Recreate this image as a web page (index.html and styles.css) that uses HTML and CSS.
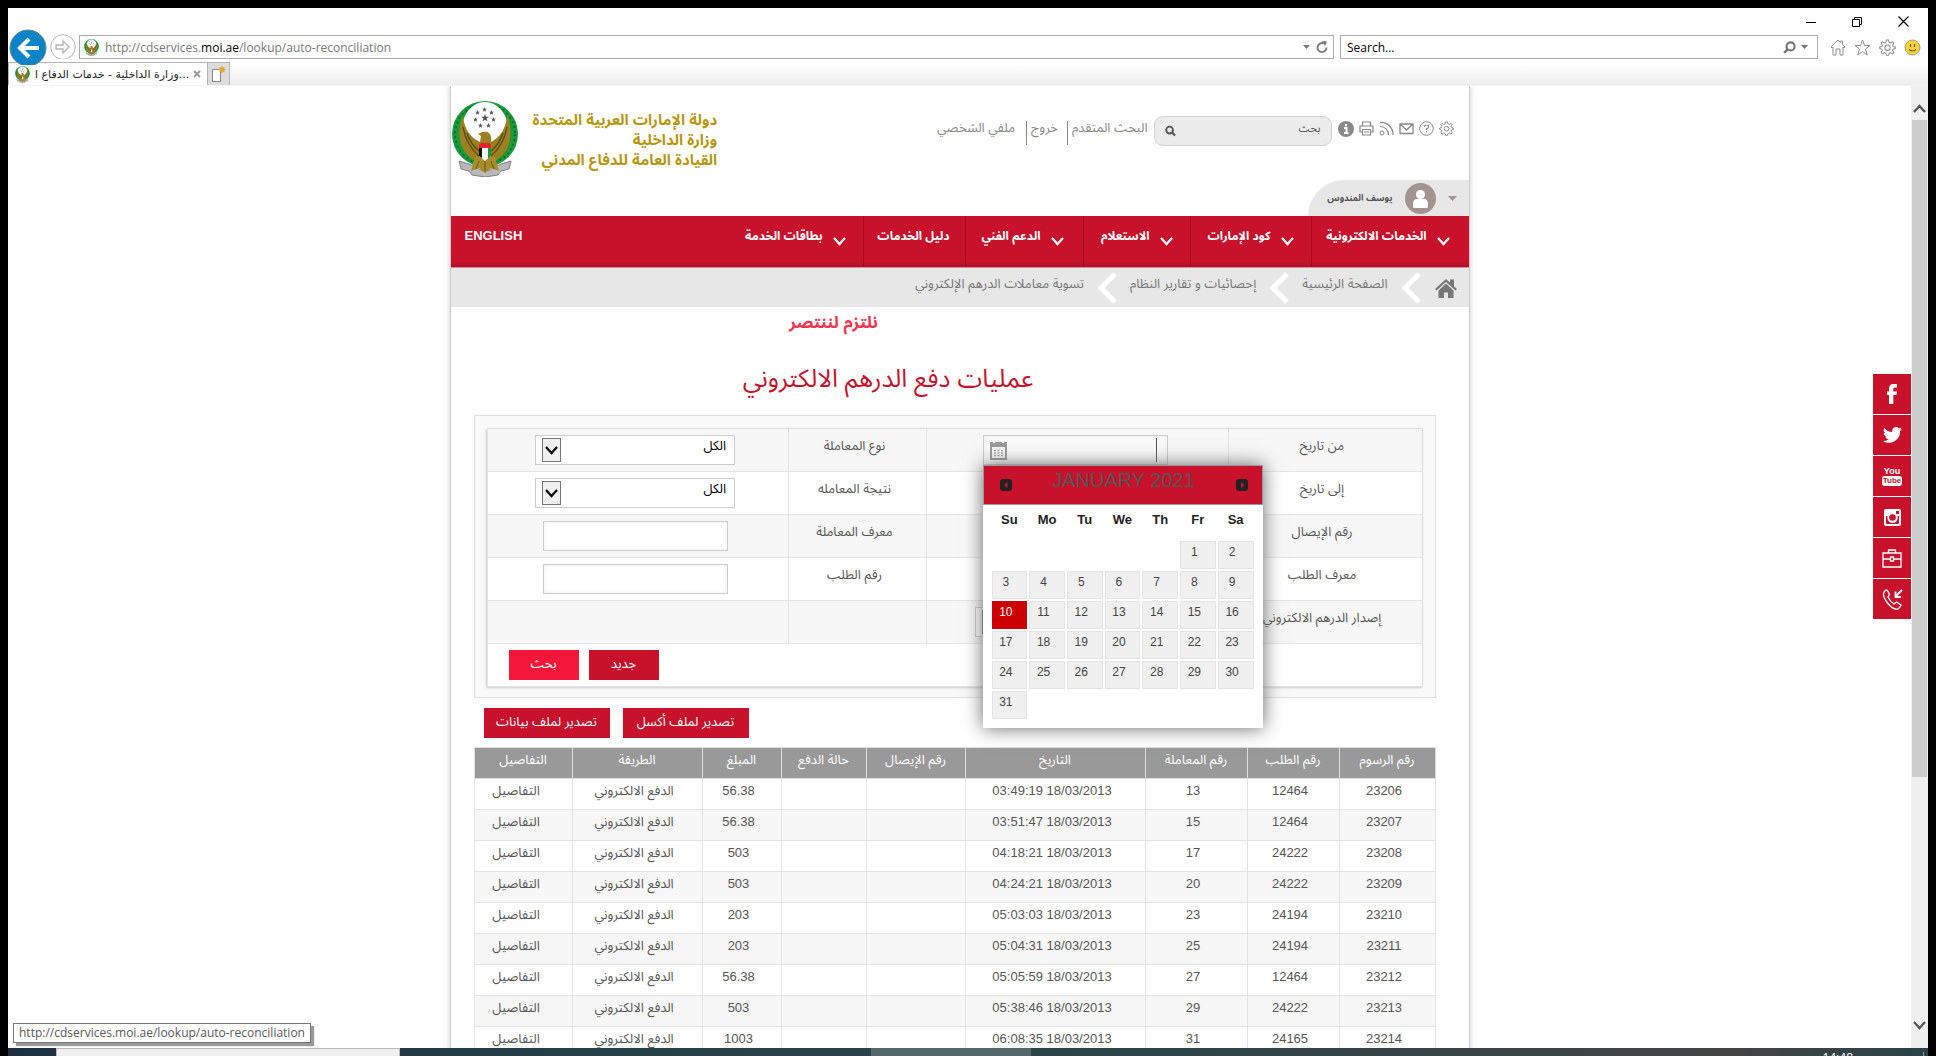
FILE: index.html
```html
<!DOCTYPE html>
<html lang="ar">
<head>
<meta charset="utf-8">
<title>وزارة الداخلية - خدمات الدفاع المدني</title>
<link rel="stylesheet" href="styles.css">
</head>
<body>
<svg class="defs" width="0" height="0" aria-hidden="true">
  <symbol id="star" viewBox="0 0 10 10"><path d="M5 0l1.300 3.400H10L7.100 5.700 8.200 9.500 5 7.300 1.800 9.500l1.100-3.800L0 3.400h3.700z"/></symbol>
  <symbol id="emblem" viewBox="0 0 68 76">
    <path d="M8 60l10 3 16 8 16-8 10-3-2 8-8 2-3 4-13 2-13-2-3-4-8-2z" fill="#b9b9bd" stroke="#7d7d84" stroke-width="1"/>
    <circle cx="34" cy="33" r="33" fill="#169a3c"/>
    <circle cx="34" cy="33" r="30" fill="none" stroke="#0c6f28" stroke-width="2" stroke-dasharray="2 3"/>
    <ellipse cx="34" cy="28" rx="23" ry="27" fill="#fff"/>
    <path d="M12 14C4 34 9 55 29 62l5-6 5 6C59 55 64 34 56 14c-1 14-7 22-16 27v-5c-1-5-4-6-9-5l-4 2 3 2-1 6C19 36 13 28 12 14z" fill="#9c8122"/>
    <path d="M12 26c2 12 8 22 16 29M16 32c3 9 7 14 12 18M56 26c-2 12-8 22-16 29M52 32c-3 9-7 14-12 18" fill="none" stroke="#5e4d10" stroke-width="1.500"/>
    <path d="M24 56h20l4 14-8-3-6 5-6-5-8 3z" fill="#a88c28"/><path d="M28 60l-3 8M34 60v10M40 60l3 8" stroke="#6a5712" fill="none"/>
    <path d="M28 44h12v11l-6 5-6-5z" fill="#fff"/><path d="M28 46h3v11l-3-2z" fill="#111"/><path d="M37 46h3v9l-3 3z" fill="#169a3c"/><path d="M28 44l2-2h8l2 2v3H28z" fill="#e2222c"/>
    <g fill="#555"><use href="#star" x="30" y="13" width="8" height="8"/><use href="#star" x="31" y="6" width="5" height="5"/><use href="#star" x="24" y="9" width="5" height="5"/><use href="#star" x="38" y="9" width="5" height="5"/><use href="#star" x="22" y="16" width="5" height="5"/><use href="#star" x="40" y="16" width="5" height="5"/><use href="#star" x="27" y="22" width="5" height="5"/><use href="#star" x="35" y="22" width="5" height="5"/></g>
  </symbol>
  <symbol id="down" viewBox="0 0 13 9"><path d="M1 1l5.500 6L12 1" fill="none" stroke="currentColor" stroke-width="2.200"/></symbol>
  <symbol id="crumb" viewBox="0 0 20 32"><path d="M18 2L4 16l14 14" fill="none" stroke="#fff" stroke-width="5"/></symbol>
  <symbol id="gear" viewBox="0 0 16 16"><path d="M7 1h2l.5 2 1.500.6L13 2.500 14 4l-1.200 1.700.6 1.300L15.300 7.500v1.500l-2 .5-.6 1.300L14 12.500 12.800 14l-1.800-1.200-1.400.6L9 15.300H7l-.5-2-1.400-.6L3.200 14 2 12.500l1.200-1.700-.6-1.300L.7 9V7.500L2.600 7l.6-1.400L2 3.800 3.300 2.500 5 3.700l1.500-.6z" fill="none" stroke="currentColor"/><circle cx="8" cy="8.200" r="2.500" fill="none" stroke="currentColor"/></symbol>
  <symbol id="lens" viewBox="0 0 12 12"><circle cx="5" cy="5" r="3.700" fill="none" stroke="currentColor" stroke-width="2"/><path d="M7.500 7.500l3.500 3.500" stroke="currentColor" stroke-width="2.400"/></symbol>
</svg>

<div class="window">
  <header class="titlebar">
    <button class="caption" aria-label="Minimize"><svg width="10" height="10"><path d="M0 5.500h10" stroke="#000"/></svg></button>
    <button class="caption" aria-label="Restore"><svg width="10" height="10"><path d="M.5 2.500h7v7h-7zM2.500 2.500v-2h7v7h-2" fill="none" stroke="#000"/></svg></button>
    <button class="caption" aria-label="Close"><svg width="11" height="11"><path d="M.5.5l10 10M10.500.5l-10 10" stroke="#000" stroke-width="1.200"/></svg></button>
  </header>

  <div class="toolbar">
    <button class="back" aria-label="Back"><svg width="38" height="36" viewBox="0 0 38 36"><circle cx="19" cy="19" r="18" fill="#0a84c6" stroke="#6f8794"/><path d="M20 10l-9 9 9 9M11 19h19" fill="none" stroke="#fff" stroke-width="4"/></svg></button>
    <button class="forward" aria-label="Forward"><svg width="26" height="26" viewBox="0 0 26 26"><circle cx="13" cy="13" r="12.300" fill="#fff" stroke="#b5b5b5"/><path d="M6 11h7V7l6 6-6 6v-4H6z" fill="none" stroke="#b5b5b5" stroke-width="1.300"/></svg></button>
    <div class="address">
      <svg width="15" height="17"><use href="#emblem"/></svg>
      <span class="url">http://cdservices.<b>moi.ae</b>/lookup/auto-reconciliation</span>
      <svg width="7" height="5"><path d="M0 0h7L3.500 4z" fill="#777"/></svg>
      <svg width="12" height="13" viewBox="0 0 12 13"><path d="M10.500 6.500a4.500 4.500 0 1 1-3-4.200" fill="none" stroke="#777" stroke-width="1.800"/><path d="M6 0l5 .5-2 4.500z" fill="#777"/></svg>
    </div>
    <div class="finder">
      <input class="finder-input" type="text" value="Search..." aria-label="Search">
      <svg class="flip" width="13" height="13"><use href="#lens"/></svg>
      <svg width="7" height="5"><path d="M0 0h7L3.500 4z" fill="#777"/></svg>
    </div>
    <div class="tools">
      <svg width="16" height="17" viewBox="0 0 16 17"><path d="M1 8l7-7 2.500 2.500V2h2v3.500L15 8l-1 1-1-1v8h-3v-6H6v6H3V8L2 9z" fill="none" stroke="#8f8f8f"/></svg>
      <svg width="17" height="17" viewBox="0 0 17 17"><path d="M8.500 1l2 5.500H16l-4.500 3.500L13.300 16l-4.800-3.500L3.700 16l1.800-6L1 6.500h5.500z" fill="none" stroke="#8f8f8f"/></svg>
      <svg class="muted" width="17" height="17"><use href="#gear"/></svg>
      <svg width="17" height="17" viewBox="0 0 17 17"><circle cx="8.500" cy="8.500" r="7.500" fill="#fbd335" stroke="#9b9b8a"/><path d="M6.500 5v3M10.500 5v3M5 10.500q3.500 3 7 0" fill="none" stroke="#6d5b14" stroke-width="1.200"/></svg>
    </div>
  </div>

  <div class="tabs">
    <div class="tab">
      <svg width="15" height="17"><use href="#emblem"/></svg>
      <span class="tab-title" dir="ltr">وزارة الداخلية - خدمات الدفاع ا...</span>
      <button class="tab-close" aria-label="Close tab"><svg width="8" height="8"><path d="M1 1l6 6M7 1L1 7" stroke="#999" stroke-width="2"/></svg></button>
    </div>
    <button class="new-tab" aria-label="New tab"><svg width="15" height="16" viewBox="0 0 15 16"><path d="M1.500 3.500h8v12h-8z" fill="#fff" stroke="#888"/><circle cx="11" cy="3.500" r="2.600" fill="#f3b33d"/><path d="M11 0v7M7.500 3.500h7M8.500 1l5 5M13.500 1l-5 5" stroke="#e9a02c"/></svg></button>
  </div>

  <div class="viewport">
    <div class="scroller" dir="rtl">
      <main class="site">
        <div class="masthead">
          <div class="user"><svg width="9" height="6"><path d="M0 1h9L4.500 6z" fill="#a39391"/></svg><svg width="31" height="31" viewBox="0 0 31 31"><circle cx="15.500" cy="15.500" r="15.500" fill="#a39391"/><circle cx="15.500" cy="11.500" r="4.500" fill="#fff"/><path d="M8 24v-3q0-5 4-5h7q4 0 4 5v3q0 1-1.500 1h-12Q8 25 8 24z" fill="#fff"/></svg><span>يوسف المندوس</span></div>
          <div class="util">
            <div class="util-icons">
              <svg width="15" height="15"><use href="#gear"/></svg>
              <svg width="15" height="15" viewBox="0 0 15 15"><circle cx="7.500" cy="7.500" r="6.800" fill="none" stroke="currentColor"/><path d="M5.500 6q0-2 2-2t2 1.700-2 2V9M7.500 10.200v1.300" fill="none" stroke="currentColor" stroke-width="1.200"/></svg>
              <svg width="15" height="15" viewBox="0 0 15 15"><path d="M1 3h13v9.500H1zM1 3l6.500 6L14 3" fill="none" stroke="currentColor" stroke-width="1.300"/></svg>
              <svg width="15" height="15" viewBox="0 0 15 15"><circle cx="3" cy="12" r="2" fill="none" stroke="currentColor"/><path d="M1 5.500a8 8 0 0 1 8.500 8.500M1 1.500a12 12 0 0 1 13 12.500" fill="none" stroke="currentColor" stroke-width="1.200"/></svg>
              <svg width="15" height="15" viewBox="0 0 15 15"><path d="M3.500 5V1h8v4M3.500 11H1V5h13v6h-2.500M3.500 8.500h8V14h-8zM5 11h5" fill="none" stroke="currentColor" stroke-width="1.200"/></svg>
              <svg width="16" height="16" viewBox="0 0 16 16"><circle cx="8" cy="8" r="8" fill="#8a8a8a"/><path d="M8 3v2.300M6 7h2.500v5M6 12h4.500" fill="none" stroke="#fff" stroke-width="2"/></svg>
            </div>
            <form class="site-search">
              <input class="site-search-input" type="text" value="بحث" aria-label="بحث">
              <button class="bare" type="button" aria-label="ابحث"><svg width="11" height="12"><use href="#lens"/></svg></button>
            </form>
            <a class="util-link" href="#">البحث المتقدم</a>
            <a class="util-link ruled" href="#">خروج</a>
            <a class="util-link ruled last" href="#">ملفي الشخصي</a>
          </div>
          <div class="brand">
            <p class="brand-text">دولة الإمارات العربية المتحدة<br>وزارة الداخلية<br>القيادة العامة للدفاع المدني</p>
            <svg width="68" height="76"><use href="#emblem"/></svg>
          </div>
        </div>

        <nav class="menu">
          <a class="c1" href="#"><svg width="13" height="9"><use href="#down"/></svg>الخدمات الالكترونية</a>
          <a class="c2" href="#"><svg width="13" height="9"><use href="#down"/></svg>كود الإمارات</a>
          <a class="c3" href="#"><svg width="13" height="9"><use href="#down"/></svg>الاستعلام</a>
          <a class="c4" href="#"><svg width="13" height="9"><use href="#down"/></svg>الدعم الفني</a>
          <a class="c5" href="#">دليل الخدمات</a>
          <a class="c6" href="#"><svg width="13" height="9"><use href="#down"/></svg>بطاقات الخدمة</a>
          <a class="lang" href="#">ENGLISH</a>
        </nav>

        <nav class="crumbs">
          <svg width="24" height="20" viewBox="0 0 24 20"><path d="M12 1L1 11l1.500 1.500L12 4l9.500 8.500L23 11l-3-2.700V1.500h-4v3z" fill="#777"/><path d="M12 5.500l-7.500 7V20H10v-5.500h4V20h5.500v-7.500z" fill="#777"/></svg>
          <svg width="20" height="32"><use href="#crumb"/></svg>
          <a href="#">الصفحة الرئيسية</a>
          <svg width="20" height="32"><use href="#crumb"/></svg>
          <a href="#">إحصائيات و تقارير النظام</a>
          <svg width="20" height="32"><use href="#crumb"/></svg>
          <a href="#">تسوية معاملات الدرهم الإلكتروني</a>
        </nav>

        <p class="slogan">نلتزم لننتصر</p>
        <h1 class="title">عمليات دفع الدرهم الالكتروني</h1>

        <form class="filter">
          <table class="fields">
            <colgroup><col class="w-label"><col class="w-field"><col class="w-label2"><col class="w-field"></colgroup>
            <tr>
              <th><label for="from">من تاريخ</label></th>
              <td>
                <div class="date">
                  <input class="box" id="from" type="text">
                  <svg class="date-icon" width="17" height="19" viewBox="0 0 17 19"><path d="M1 3h15v15H1z" fill="#f7f7f7" stroke="#9a9a9a" stroke-width="2"/><path d="M0 1h3v3h2V1h7v3h2V1h3v5H0z" fill="#9a9a9a"/><path d="M4 9.500h9M4 12h9M4 14.500h9" stroke="#aaa" stroke-width="1.500" stroke-dasharray="2 1.500"/></svg>
                  <span class="caret"></span>
                  <div class="picker" dir="ltr">
                    <div class="picker-head">
                      <button class="bare" type="button" aria-label="Prev"><svg width="12" height="12"><rect width="12" height="12" rx="3" fill="#222"/><path d="M7.500 3v6L4 6z" fill="#c8122c"/></svg></button>
                      <span class="picker-title">JANUARY 2021</span>
                      <button class="bare" type="button" aria-label="Next"><svg width="12" height="12"><rect width="12" height="12" rx="3" fill="#222"/><path d="M5 3v6l3.500-3z" fill="#c8122c"/></svg></button>
                    </div>
                    <table class="days">
                      <tr><th>Su</th><th>Mo</th><th>Tu</th><th>We</th><th>Th</th><th>Fr</th><th>Sa</th></tr>
                      <tr><td></td><td></td><td></td><td></td><td></td><td><a href="#">1</a></td><td><a href="#">2</a></td></tr>
                      <tr><td><a href="#">3</a></td><td><a href="#">4</a></td><td><a href="#">5</a></td><td><a href="#">6</a></td><td><a href="#">7</a></td><td><a href="#">8</a></td><td><a href="#">9</a></td></tr>
                      <tr><td><a class="today" href="#">10</a></td><td><a href="#">11</a></td><td><a href="#">12</a></td><td><a href="#">13</a></td><td><a href="#">14</a></td><td><a href="#">15</a></td><td><a href="#">16</a></td></tr>
                      <tr><td><a href="#">17</a></td><td><a href="#">18</a></td><td><a href="#">19</a></td><td><a href="#">20</a></td><td><a href="#">21</a></td><td><a href="#">22</a></td><td><a href="#">23</a></td></tr>
                      <tr><td><a href="#">24</a></td><td><a href="#">25</a></td><td><a href="#">26</a></td><td><a href="#">27</a></td><td><a href="#">28</a></td><td><a href="#">29</a></td><td><a href="#">30</a></td></tr>
                      <tr><td><a href="#">31</a></td><td></td><td></td><td></td><td></td><td></td><td></td></tr>
                    </table>
                  </div>
                </div>
              </td>
              <th><label for="kind">نوع المعاملة</label></th>
              <td><span class="pick"><select class="select" id="kind"><option>الكل</option></select><span class="arrow"><svg width="13" height="9"><use href="#down"/></svg></span></span></td>
            </tr>
            <tr>
              <th><label for="to">إلى تاريخ</label></th>
              <td><input class="box" id="to" type="text"></td>
              <th><label for="result">نتيجة المعامله</label></th>
              <td><span class="pick"><select class="select" id="result"><option>الكل</option></select><span class="arrow"><svg width="13" height="9"><use href="#down"/></svg></span></span></td>
            </tr>
            <tr>
              <th><label for="receipt">رقم الإيصال</label></th>
              <td><input class="box" id="receipt" type="text"></td>
              <th><label for="tid">معرف المعاملة</label></th>
              <td><input class="box" id="tid" type="text"></td>
            </tr>
            <tr>
              <th><label for="rid">معرف الطلب</label></th>
              <td><input class="box" id="rid" type="text"></td>
              <th><label for="rno">رقم الطلب</label></th>
              <td><input class="box" id="rno" type="text"></td>
            </tr>
            <tr>
              <th><label for="version">إصدار الدرهم الالكتروني</label></th>
              <td><span class="pick"><select class="select" id="version"><option>الكل</option></select><span class="arrow"><svg width="13" height="9"><use href="#down"/></svg></span></span></td>
              <th></th>
              <td></td>
            </tr>
            <tr><td class="actions" colspan="4"><div class="buttons"><button class="btn" type="button">جديد</button><button class="btn hot" type="button">بحث</button></div></td></tr>
          </table>
        </form>

        <div class="exports">
          <button class="btn wide" type="button">تصدير لملف أكسل</button>
          <button class="btn wide" type="button">تصدير لملف بيانات</button>
        </div>

        <table class="data">
          <colgroup><col class="d1"><col class="d2"><col class="d3"><col class="d4"><col class="d5"><col class="d6"><col class="d7"><col class="d8"><col class="d9"></colgroup>
          <thead><tr><th>رقم الرسوم</th><th>رقم الطلب</th><th>رقم المعاملة</th><th>التاريخ</th><th>رقم الإيصال</th><th>حالة الدفع</th><th>المبلغ</th><th>الطريقة</th><th>التفاصيل</th></tr></thead>
          <tbody>
            <tr><td>23206</td><td>12464</td><td>13</td><td dir="ltr">03:49:19 18/03/2013</td><td></td><td></td><td>56.38</td><td>الدفع الالكتروني</td><td><a href="#">التفاصيل</a></td></tr>
            <tr><td>23207</td><td>12464</td><td>15</td><td dir="ltr">03:51:47 18/03/2013</td><td></td><td></td><td>56.38</td><td>الدفع الالكتروني</td><td><a href="#">التفاصيل</a></td></tr>
            <tr><td>23208</td><td>24222</td><td>17</td><td dir="ltr">04:18:21 18/03/2013</td><td></td><td></td><td>503</td><td>الدفع الالكتروني</td><td><a href="#">التفاصيل</a></td></tr>
            <tr><td>23209</td><td>24222</td><td>20</td><td dir="ltr">04:24:21 18/03/2013</td><td></td><td></td><td>503</td><td>الدفع الالكتروني</td><td><a href="#">التفاصيل</a></td></tr>
            <tr><td>23210</td><td>24194</td><td>23</td><td dir="ltr">05:03:03 18/03/2013</td><td></td><td></td><td>203</td><td>الدفع الالكتروني</td><td><a href="#">التفاصيل</a></td></tr>
            <tr><td>23211</td><td>24194</td><td>25</td><td dir="ltr">05:04:31 18/03/2013</td><td></td><td></td><td>203</td><td>الدفع الالكتروني</td><td><a href="#">التفاصيل</a></td></tr>
            <tr><td>23212</td><td>12464</td><td>27</td><td dir="ltr">05:05:59 18/03/2013</td><td></td><td></td><td>56.38</td><td>الدفع الالكتروني</td><td><a href="#">التفاصيل</a></td></tr>
            <tr><td>23213</td><td>24222</td><td>29</td><td dir="ltr">05:38:46 18/03/2013</td><td></td><td></td><td>503</td><td>الدفع الالكتروني</td><td><a href="#">التفاصيل</a></td></tr>
            <tr><td>23214</td><td>24165</td><td>31</td><td dir="ltr">06:08:35 18/03/2013</td><td></td><td></td><td>1003</td><td>الدفع الالكتروني</td><td><a href="#">التفاصيل</a></td></tr>
          </tbody>
        </table>
      </main>
    </div>

    <div class="social">
      <a href="#" aria-label="Facebook"><svg width="12" height="20" viewBox="0 0 12 20"><path d="M3 20v-9H1V7.500h2V5q0-5 4.500-5H11v3.500H9Q7.300 3.500 7.300 5v2.500H11l-.5 3.500H7.300v9z" fill="#fff"/></svg></a>
      <a href="#" aria-label="Twitter"><svg width="19" height="16" viewBox="0 0 24 20"><path d="M24 2.400a9.800 9.800 0 0 1-2.800.8A4.900 4.900 0 0 0 23.300.5a9.800 9.800 0 0 1-3.100 1.200 4.900 4.900 0 0 0-8.400 4.500A14 14 0 0 1 1.700 1a4.900 4.900 0 0 0 1.500 6.600A4.900 4.900 0 0 1 1 7v.1a4.900 4.900 0 0 0 3.900 4.800 4.900 4.900 0 0 1-2.200.1 4.900 4.900 0 0 0 4.600 3.400A9.900 9.900 0 0 1 0 17.500 14 14 0 0 0 21.500 5.100 10 10 0 0 0 24 2.400z" fill="#fff"/></svg></a>
      <a class="yt" href="#" aria-label="YouTube"><span>You</span><span class="tube">Tube</span></a>
      <a href="#" aria-label="Instagram"><svg width="19" height="19" viewBox="0 0 19 19"><path fill-rule="evenodd" d="M3 1h13q2 0 2 2v13q0 2-2 2H3q-2 0-2-2V3q0-2 2-2zM13 3v3h3V3zM3 8v7q0 1 1 1h11q1 0 1-1V8h-1.500a5.300 5.300 0 1 1-10 0z" fill="#fff"/><circle cx="9.500" cy="9.500" r="3.300" fill="#c8122c"/></svg></a>
      <a href="#" aria-label="Jobs"><svg width="20" height="19" viewBox="0 0 20 19"><path d="M1 4h18v14H1zM6.500 4V1h7v3M1 10h7.500M11.500 10H19M8.500 8h3v4h-3z" fill="none" stroke="#fff" stroke-width="1.300"/></svg></a>
      <a href="#" aria-label="Call"><svg width="21" height="21" viewBox="0 0 21 21"><path d="M2 3l2-2 1.500.5 2 4L6 8q2 4.500 6 7l2.500-2 4.500 3-.5 1.500-2.500 2.500Q11 21 5.500 14T2 3z" fill="none" stroke="#fff" stroke-width="1.300"/><path d="M20 1l-6 6M13.500 2.500V8H19" fill="none" stroke="#fff" stroke-width="1.800"/></svg></a>
    </div>

    <div class="scrollbar">
      <svg width="13" height="9" viewBox="0 0 13 9"><path d="M1 8l5.500-6L12 8" fill="none" stroke="#555" stroke-width="2.500"/></svg>
      <div class="thumb"></div>
      <svg width="13" height="9"><use href="#down"/></svg>
    </div>
    <div class="status">http://cdservices.moi.ae/lookup/auto-reconciliation</div>
  </div>
</div>

<footer class="taskbar"><div class="task-search"></div><div class="task-active"></div><time class="clock">14:48</time></footer>
</body>
</html>
```

FILE: styles.css
```css
* { box-sizing: border-box; }

body {
  margin: 0;
  height: 100vh;
  display: flex;
  flex-direction: column;
  padding: 8px 8px 0;
  overflow: hidden;
  background: #000;
  font-family: "Liberation Sans", "Noto Sans Arabic", "DejaVu Sans", sans-serif;
  font-size: 12px;
  color: #555;
}
svg { display: block; flex: none; }
.defs { position: absolute; }
a { color: inherit; text-decoration: none; }
button, input, select { font: inherit; color: inherit; margin: 0; }
button { display: grid; place-items: center; padding: 0; border: 0; background: none; }
table { border-collapse: collapse; table-layout: fixed; }

/* Browser chrome */
.window { flex: 1; min-height: 0; display: flex; flex-direction: column; background: #fff; font-family: "Open Sans", "Noto Sans", "DejaVu Sans", sans-serif; }
.titlebar { display: flex; justify-content: flex-end; height: 27px; padding: 0 2px; }
.caption { width: 46px; height: 27px; }
.toolbar { display: flex; align-items: center; height: 24px; padding: 0 7px 0 1px; }
.back { width: 38px; height: 24px; overflow: visible; align-items: start; align-content: center; position: relative; z-index: 1; }
.forward { width: 26px; margin: 0 3px; }
.address, .finder { display: flex; align-items: center; height: 24px; border: 1px solid #ababab; background: #fff; }
.address { flex: 1; gap: 6px; padding: 0 5px 0 4px; }
.url { flex: 1; color: #777; white-space: nowrap; }
.url b { font-weight: 400; color: #000; }
.finder { width: 478px; gap: 5px; margin-left: 6px; padding: 0 9px 0 6px; color: #777; }
.finder-input { flex: 1; min-width: 0; border: 0; padding: 0; color: #000; outline: 0; background: none; }
.flip { transform: scaleX(-1); }
.tools { display: flex; gap: 8px; margin-left: 12px; }
.muted { color: #8f8f8f; }
.tabs { display: flex; height: 27px; padding-top: 3px; background: linear-gradient(#fff 3px, #eee); border-bottom: 1px solid #f4f4f4; }
.tab { display: flex; align-items: center; width: 199px; padding: 0 6px; border: 1px solid #b5b5b5; border-width: 1px 0 0 1px; background: #fff; color: #222; }
.tab-title { flex: 1; padding: 0 5px; white-space: nowrap; font-family: "DejaVu Sans", sans-serif; font-size: 11px; overflow: hidden; }
.new-tab { width: 23px; border: 1px solid #b5b5b5; border-bottom: 0; background: #ddd; }

.viewport { flex: 1; min-height: 0; display: flex; position: relative; overflow: hidden; }
.scroller { flex: 1; min-width: 0; overflow: hidden; font-family: "Liberation Sans", "Noto Sans Arabic", "DejaVu Sans", sans-serif; font-size: 13px; }
.scrollbar { display: flex; flex-direction: column; align-items: center; width: 17px; padding: 18px 0; background: #f0f0f0; color: #555; }
.thumb { width: 15px; height: 71%; margin: 7px 0 auto; background: #cdcdcd; }
.status { position: absolute; left: 5px; bottom: 5px; height: 20px; padding: 0 5px; border: 1px solid #767676; background: #fff; color: #575757; line-height: 18px; box-shadow: 3px 3px 1px #9a9a9a; }

/* Site column */
.site { width: 100%; max-width: 1020px; margin: 0 auto; border: 1px solid #ccc; border-width: 0 1px; box-shadow: 0 0 6px #ccc; background: #fff; }
.masthead { display: grid; grid-template-columns: auto 1fr; grid-template-rows: 94px 36px; }
.util { grid-area: 1 / 1; display: flex; align-items: flex-start; padding: 30px 15px 0 0; color: #888; }
.util-icons { display: flex; gap: 5px; padding-top: 5px; }
.site-search { display: flex; align-items: center; width: 178px; height: 30px; margin: 0 6px; padding: 0 10px; border: 1px solid #d3d3d3; border-radius: 9px; background: #ececec; color: #555; }
.site-search-input { flex: 1; min-width: 0; height: 24px; padding: 0 0 6px; border: 0; outline: 0; background: none; font-size: 11px; }
.util-link { height: 24px; margin-top: 5px; line-height: 14px; white-space: nowrap; }
.ruled { margin-right: 4px; padding-right: 9px; border-right: 1px solid #888; }
.ruled.last { padding-right: 11px; }
.brand { grid-area: 1 / 2 / span 2; display: flex; justify-content: flex-end; align-items: flex-start; gap: 14px; padding-top: 15px; }
.brand-text { margin: 9px 0 0; font-size: 15px; font-weight: 700; line-height: 20px; color: #b8960f; white-space: nowrap; }
.user { grid-area: 2 / 1; justify-self: start; display: flex; align-items: center; gap: 12px; width: 161px; padding-right: 12px; border-top-left-radius: 36px; background: #e7e7e7; font-size: 9px; font-weight: 700; white-space: nowrap; }

.menu { display: flex; height: 52px; background: linear-gradient(#c8122c 46px, #a81026); color: #fff; font-size: 12px; font-weight: 700; border-bottom: 1px solid #d98a94; }
.menu a { display: flex; gap: 10px; padding: 12px 19px 0 0; border-left: 1px solid #a30c20; line-height: 16px; white-space: nowrap; }
.menu svg { margin-top: 9px; }
.menu .c1 { width: 158px; }
.menu .c2 { width: 121px; padding-right: 17px; }
.menu .c3 { width: 107px; padding-right: 17px; }
.menu .c4 { width: 118px; padding-right: 19px; }
.menu .c5 { width: 102px; padding-right: 15px; }
.menu .c6 { padding-right: 17px; border: 0; }
.menu .lang { margin-right: auto; padding: 12px 0 0 14px; border: 0; font-size: 13px; }

.crumbs { display: flex; align-items: center; gap: 13px; height: 39px; padding-right: 11px; background: #e7e7e7; color: #777; white-space: nowrap; }
.crumbs a { padding-bottom: 7px; }

.slogan { margin: 6px 0 0; padding-right: 252px; text-align: center; font-size: 17px; font-weight: 700; line-height: 20px; color: #f03550; }
.title { margin: 28px 0 0; padding-right: 143px; text-align: center; font-size: 25px; font-weight: 400; line-height: 34px; color: #c8122c; }

/* Filter form */
.filter { margin: 20px 33px 0 23px; padding: 12px 12px 10px; border: 1px solid #ddd; background: #f9f9f9; }
.fields { width: 100%; border: 1px solid #ddd; background: #fff; box-shadow: -1px 1px 2px #ccc; }
.w-label { width: 194px; }
.w-label2 { width: 138px; }
.fields tr { height: 43px; border-bottom: 1px solid #e4e4e4; }
.fields tr:nth-child(odd) { background: #f7f7f7; }
.fields th { padding: 0 6px 9px 0; font-weight: 400; border-left: 1px solid #e4e4e4; white-space: nowrap; }
.fields td { padding: 0; border-left: 1px solid #e4e4e4; }
.fields td > .box, .date { margin: 0 60px 0 auto; }
.box { display: block; width: 185px; height: 30px; border: 1px solid #ccc; background: #fff; outline: 0; box-shadow: inset 0 0 5px #eee; }
.date { position: relative; width: 185px; }
.date .box { background: #fafafa; }
.date-icon { position: absolute; left: 7px; top: 6px; }
.caret { position: absolute; right: 11px; top: 3px; width: 1px; height: 24px; background: #555; }
.pick { display: grid; width: 200px; margin-right: 53px; }
.select { grid-area: 1 / 1; width: 200px; height: 30px; appearance: none; padding: 0 8px 9px; border: 1px solid #ccc; border-radius: 0; background: #fff; color: #000; }
.arrow { grid-area: 1 / 1; justify-self: end; align-self: center; display: grid; place-items: center; width: 19px; height: 24px; margin-left: 7px; border: 1px solid #777; background: #f0f0f0; color: #000; pointer-events: none; }
.buttons { display: flex; justify-content: flex-end; gap: 10px; padding-left: 21px; }
.btn { min-width: 70px; height: 30px; padding-bottom: 7px; background: #c8122c; color: #fff; }
.btn.hot { background: #f5173a; }
.btn.wide { min-width: 126px; }
.exports { display: flex; justify-content: flex-end; gap: 13px; padding: 10px 0 9px 33px; }

/* Date picker */
.picker { position: absolute; left: 0; top: 30px; z-index: 2; width: 280px; height: 263px; background: #fff; box-shadow: 0 0 18px #666; }
.picker-head { display: flex; justify-content: space-between; align-items: center; height: 40px; padding: 0 14px 0 16px; border: 1px solid #999; background: #c8122c; }
.picker-title { padding-bottom: 10px; font-size: 20px; line-height: 24px; }
.days { width: 264px; margin: 0 8px; font-size: 12px; }
.days tr, .days tr:nth-child(odd) { height: 30px; border: 0; background: none; }
.days th { height: 35px; padding: 0 0 7px; border: 0; font-size: 13px; font-weight: 700; color: #222; }
.days td { padding: 1px; border: 0; }
.days a { display: block; height: 28px; padding-right: 7px; border: 1px solid #e3e3e3; background: #f0f0f0; color: #444; line-height: 21px; text-align: center; }
.days .today { border-color: #c00; background: #c00; color: #fff; }

/* Results */
.data { width: calc(100% - 56px); margin: 0 33px 0 23px; border: 1px solid #ddd; text-align: center; line-height: 16px; }
.d1 { width: 96px; } .d2 { width: 92px; } .d3 { width: 102px; } .d4 { width: 180px; } .d5 { width: 99px; } .d6 { width: 85px; } .d7 { width: 79px; } .d8 { width: 130px; }
.data th { height: 31px; padding: 0 0 7px; border: 1px solid #ddd; background: #999; color: #fff; font-weight: 400; }
.data td { height: 31px; padding: 0 6px 6px 0; border: 1px solid #e4e4e4; }
.data td:last-child { padding-right: 14px; }
.data tr:nth-child(even) { background: #f7f7f7; }

.social { position: absolute; right: 17px; top: 288px; display: flex; flex-direction: column; gap: 1px; }
.social a { display: grid; place-content: center; width: 38px; height: 40px; background: #c8122c; }
.social .yt { justify-items: center; color: #fff; font: 700 9px/10px "Liberation Sans", sans-serif; }
.tube { padding: 0 1px; border-radius: 3px; background: #fff; color: #c8122c; font-size: 8px; }

.taskbar { display: flex; height: 8px; overflow: hidden; background: linear-gradient(90deg, #1c3040, #263f46 30%, #2e4448 60%, #444 90%, #2b4247); }
.task-search { width: 344px; margin-left: 48px; border: 1px solid #bbb; border-bottom: 0; background: #f0f0f0; }
.task-active { width: 160px; margin-left: 471px; background: #54686c; }
.clock { height: 14px; margin: 4px 4px 0 auto; padding-right: 70px; border-right: 1px solid #8a9a9c; color: #fff; line-height: 12px; font-family: "Open Sans", sans-serif; }
```
